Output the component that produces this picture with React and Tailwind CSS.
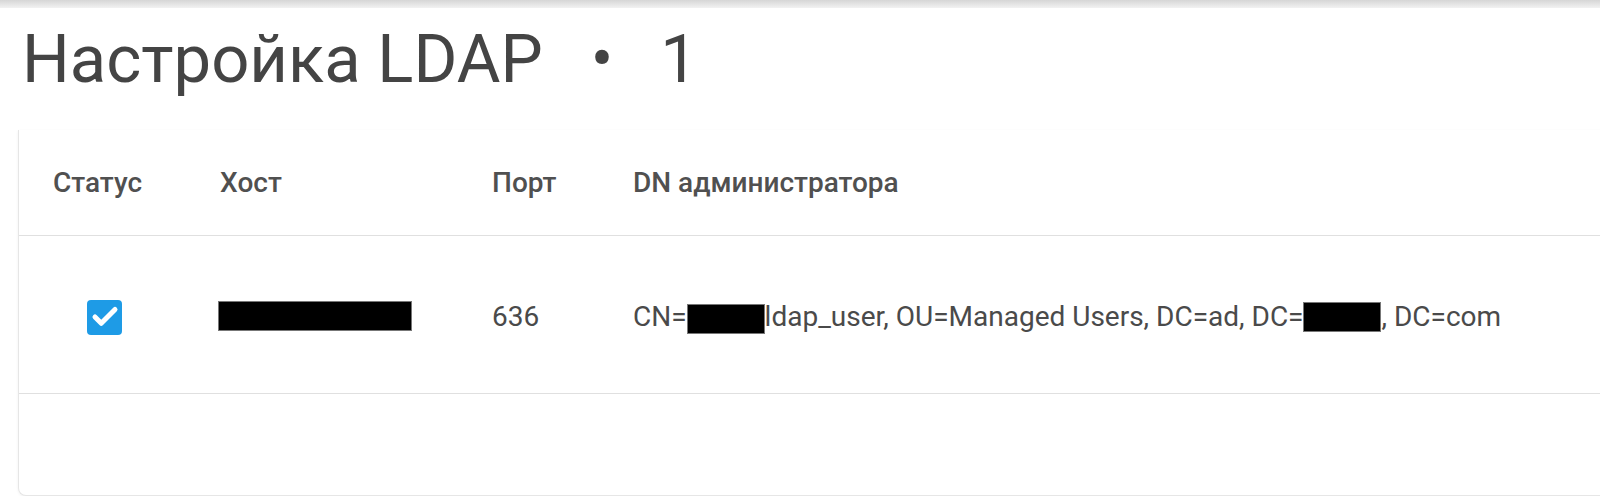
import { Check } from 'lucide-react';

const cols = 'grid grid-cols-[167px_272px_141px_1fr]';

function Redacted({ className }) {
  return <span className={`inline-block bg-black border border-[#777] align-middle ${className}`} />;
}

export default function App() {
  return (
    <div className="w-[1600px] h-[496px] overflow-hidden bg-white font-['Roboto',sans-serif] text-[#454545]">
      {/* top shadow strip */}
      <div className="h-[8px] bg-gradient-to-b from-[#d6d6d6] to-[#f2f2f2]" />

      {/* Title */}
      <h1 className="pl-[22px] pt-[11px] h-[122px] text-[67px] leading-[80px] font-normal text-[#444] flex items-start">
        <span>Настройка LDAP</span>
        <span className="ml-[48px] mr-[47px]">•</span>
        <span>1</span>
      </h1>

      {/* Card */}
      <div className="ml-[18px] w-[1640px] h-[366px] bg-white border-l border-b border-[#e6e6e6] rounded-bl-[8px] shadow-[0_1px_3px_rgba(0,0,0,0.06)]">
        <div className={`${cols} h-[106px] items-center border-b border-[#e0e0e0] text-[28px] font-medium text-[#505050]`}>
          <div className="pl-[34px]">Статус</div>
          <div className="pl-[34px]">Хост</div>
          <div className="pl-[34px]">Порт</div>
          <div className="pl-[34px]">DN администратора</div>
        </div>

        <div className={`${cols} h-[158px] items-center border-b border-[#e0e0e0] text-[28px] text-[#4a4a4a] pt-[5px]`}>
          <div className="flex justify-center pl-[4px]">
            <span className="w-[35px] h-[35px] rounded-[4px] bg-[#1e9be6] flex items-center justify-center">
              <Check className="w-[30px] h-[30px] text-white" strokeWidth={4} />
            </span>
          </div>
          <div className="pl-[32px]">
            <Redacted className="w-[194px] h-[30px] -mt-[5px]" />
          </div>
          <div className="pl-[34px]">636</div>
          <div className="pl-[34px] whitespace-nowrap flex items-center">
            <span>CN=</span>
            <Redacted className="w-[78px] h-[30px] mt-[4px]" />
            <span>ldap_user, OU=Managed Users, DC=ad, DC=</span>
            <Redacted className="w-[78px] h-[30px]" />
            <span>, DC=com</span>
          </div>
        </div>
      </div>
    </div>
  );
}
